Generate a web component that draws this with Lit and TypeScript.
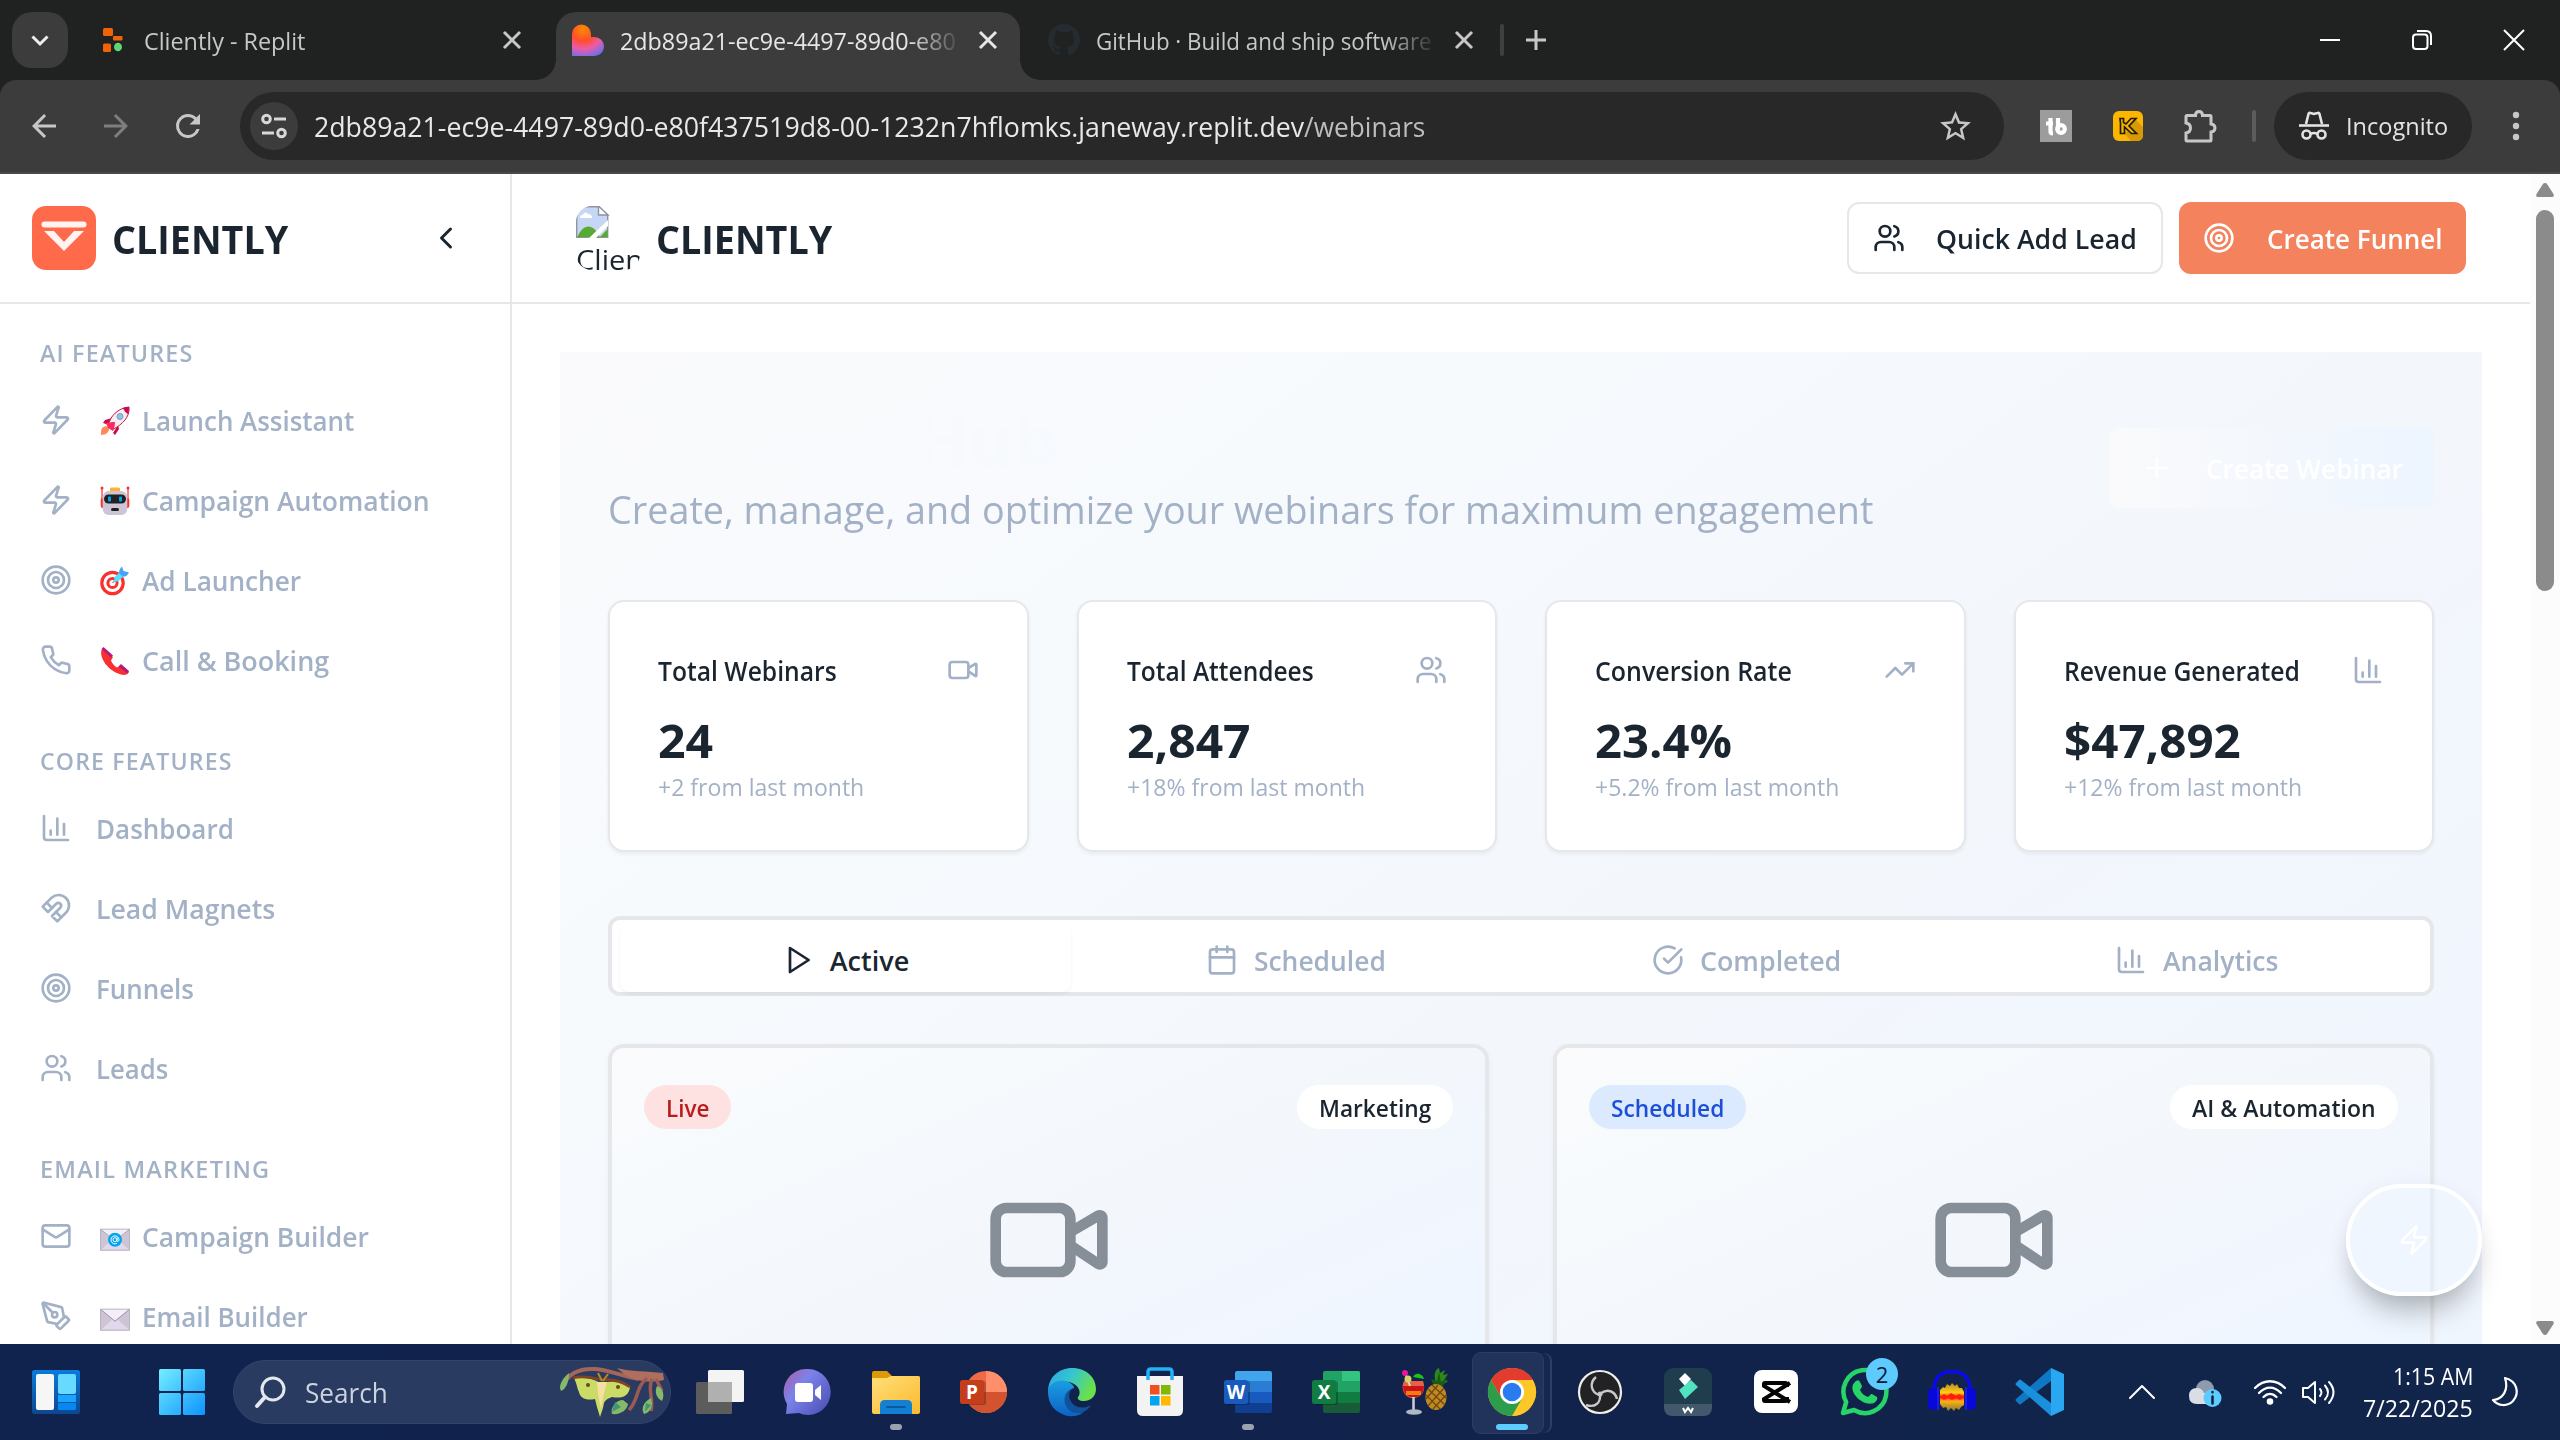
import { LitElement, html, css, svg, nothing } from "lit";
import { customElement, property } from "lit/decorators.js";

/* ---------- outline icons, 24-unit grid ---------- */
const ICONS: Record<string, any> = {
  zap: svg`<path d="M4 14a1 1 0 0 1-.78-1.63l9.9-10.2a.5.5 0 0 1 .86.46l-1.92 6.02A1 1 0 0 0 13 10h7a1 1 0 0 1 .78 1.63l-9.9 10.2a.5.5 0 0 1-.86-.46l1.92-6.02A1 1 0 0 0 11 14z"/>`,
  target: svg`<circle cx="12" cy="12" r="10"/><circle cx="12" cy="12" r="6"/><circle cx="12" cy="12" r="2"/>`,
  phone: svg`<path d="M22 16.92v3a2 2 0 0 1-2.18 2 19.79 19.79 0 0 1-8.63-3.07 19.5 19.5 0 0 1-6-6 19.79 19.79 0 0 1-3.07-8.67A2 2 0 0 1 4.11 2h3a2 2 0 0 1 2 1.72 12.84 12.84 0 0 0 .7 2.81 2 2 0 0 1-.45 2.11L8.09 9.91a16 16 0 0 0 6 6l1.27-1.27a2 2 0 0 1 2.11-.45 12.84 12.84 0 0 0 2.81.7A2 2 0 0 1 22 16.92z"/>`,
  chart: svg`<path d="M3 3v16a2 2 0 0 0 2 2h16"/><path d="M18 17V9"/><path d="M13 17V5"/><path d="M8 17v-3"/>`,
  magnet: svg`<path d="m6 15-4-4 6.75-6.77a7.79 7.79 0 0 1 11 11L13 22l-4-4 6.39-6.36a2.14 2.14 0 0 0-3-3L6 15"/><path d="m5 8 4 4"/><path d="m12 15 4 4"/>`,
  users: svg`<path d="M16 21v-2a4 4 0 0 0-4-4H6a4 4 0 0 0-4 4v2"/><circle cx="9" cy="7" r="4"/><path d="M22 21v-2a4 4 0 0 0-3-3.87"/><path d="M16 3.13a4 4 0 0 1 0 7.75"/>`,
  mail: svg`<rect x="2" y="4" width="20" height="16" rx="2"/><path d="m22 7-8.97 5.7a1.94 1.94 0 0 1-2.06 0L2 7"/>`,
  pen: svg`<path d="M15.707 21.293a1 1 0 0 1-1.414 0l-1.586-1.586a1 1 0 0 1 0-1.414l5.586-5.586a1 1 0 0 1 1.414 0l1.586 1.586a1 1 0 0 1 0 1.414z"/><path d="m18 13-1.375-6.874a1 1 0 0 0-.746-.776L3.235 2.028a1 1 0 0 0-1.207 1.207L5.35 15.879a1 1 0 0 0 .776.746L13 18"/><path d="m2.3 2.3 7.286 7.286"/><circle cx="11" cy="11" r="2"/>`,
  play: svg`<path d="M6 3 20 12 6 21z"/>`,
  calendar: svg`<path d="M8 2v4"/><path d="M16 2v4"/><rect x="3" y="4" width="18" height="18" rx="2"/><path d="M3 10h18"/>`,
  check: svg`<path d="M21.801 10A10 10 0 1 1 17 3.335"/><path d="m9 11 3 3L22 4"/>`,
  trend: svg`<path d="M22 7 13.5 15.5 8.5 10.5 2 17"/><path d="M16 7h6v6"/>`,
  plus: svg`<path d="M5 12h14"/><path d="M12 5v14"/>`,
  video: svg`<path d="m16 13 5.223 3.482a.5.5 0 0 0 .777-.416V7.87a.5.5 0 0 0-.752-.432L16 10.5"/><rect x="2" y="6" width="14" height="12" rx="2"/>`,
  left: svg`<path d="m15 18-6-6 6-6"/>`,
};
const icon = (name: string, size = 32, weight = 2) => html`<svg class="icon" width=${size} height=${size} viewBox="0 0 24 24" fill="none" stroke="currentColor" stroke-width=${weight} stroke-linecap="round" stroke-linejoin="round">${ICONS[name]}</svg>`;

/* ---------- colour glyphs beside the menu labels, 30-unit grid ---------- */
const EMOJI: Record<string, any> = {
  rocket: svg`<path d="M2 22c3-3 7-2 7 1s-3 6-8 6c0-3 0-5 1-7z" fill="#ff8a5c"/><path d="M5 14 12 12 9 19 3 17z" fill="#ca0b4a"/><path d="M13 27l5-8 1 4-4 6z" fill="#ca0b4a"/><path d="M8 20C10 10 18 2 29 1c1 10-6 17-17 23z" fill="#f4eef2" stroke="#d1124e" stroke-width="1"/><path d="M23 2c2-1 4-1 6-1 0 2 0 4-1 7-2-1-4-3-5-6z" fill="#ca0b4a"/><path d="M6 17c3-1 6-1 9-1 0 4-1 6-2 9l-5-3z" fill="#fb2c5c"/><circle cx="20" cy="10.500" r="3" fill="#85c6f5" stroke="#8b98a5" stroke-width="1"/>`,
  robot: svg`<path d="M2 1v20M28 1v20" stroke="#f8312f" stroke-width="1.200"/><circle cx="2" cy="2" r="1.500" fill="#f8312f"/><circle cx="28" cy="2" r="1.500" fill="#f8312f"/><rect x="0.700" y="12" width="4" height="10" rx="2" fill="#f8312f"/><rect x="25.300" y="12" width="4" height="10" rx="2" fill="#f8312f"/><rect x="10" y="1.500" width="10" height="6" rx="1.500" fill="#ffb02e"/><rect x="2.700" y="5" width="24.600" height="24" rx="6" fill="#cdc4d6"/><rect x="4" y="8.500" width="22" height="9" rx="4.500" fill="#212121"/><rect x="8" y="10.500" width="3" height="5" rx="1" fill="#00a6ed"/><rect x="19" y="10.500" width="3" height="5" rx="1" fill="#00a6ed"/><rect x="11" y="22" width="8" height="3" rx="1.500" fill="#212121"/>`,
  bullseye: svg`<circle cx="12.500" cy="17" r="10.700" fill="#fff" stroke="#f8312f" stroke-width="3.200"/><circle cx="12.500" cy="17" r="4.600" fill="#fff" stroke="#f8312f" stroke-width="3"/><path d="M12.500 17 20 9" stroke="#7ba7c4" stroke-width="1.500"/><path d="M14.500 11 20 6l4 4-5.500 5-4.500 1z" fill="#50e2ff"/><path d="M19 7c0-3 1-4.500 3-6.500L23.500 5 29 6.500C27 10 25 11 22.500 10.500z" fill="#46a4fb"/>`,
  receiver: svg`<path d="M2 3c-4 7 6 24 22 26 2 0 4-1 5-3l-8-7-4 2.500c-2-1-5-4-6-7L13 11z" fill="#f92f30"/><path d="m3.500 1 9.500 8.500-2 2L1.500 3zM21 18l8 7-1.500 2.500-9-7z" fill="#b4197c"/>`,
  email: svg`<g transform="translate(0 1.700)"><rect x="0.600" y="5.500" width="28.800" height="21" fill="#e1d8ec" stroke="#b4acbc"/><path d="M1 6v20l11-10zM29 6v20L18 16z" fill="#cdc4d6"/><path d="M1 6h28L15 17z" fill="#f3eef8"/><path d="M1 6l14 11L29 6" fill="none" stroke="#998ea4" stroke-width=".8"/><circle cx="15" cy="16" r="7" fill="#00a6ed"/><circle cx="15" cy="16" r="2" fill="none" stroke="#fff"/><path d="M17 14v3c0 1.200 2 1 2-1a4 4 0 1 0-2 3.600" fill="none" stroke="#fff"/></g>`,
  envelope: svg`<g transform="translate(0 1.700)"><rect x="0.600" y="5.500" width="28.800" height="21" fill="#e1d8ec" stroke="#b4acbc"/><path d="M1 6v20l11-10zM29 6v20L18 16z" fill="#cdc4d6"/><path d="M1 6h28L15 17z" fill="#f3eef8"/><path d="M1 6l14 11.500L29 6" fill="none" stroke="#998ea4"/></g>`,
};
const emoji = (name: string) => html`<svg class="emoji" width="30" height="30" viewBox="0 0 30 30">${EMOJI[name]}</svg>`;

/* ---------- taskbar apps, 48-unit grid ---------- */
const office = (dark: string, letter: string, back: any) => svg`${back}<rect x="2" y="13" width="24" height="24" rx="2.500" fill="#000" opacity=".25"/><rect x="0" y="12" width="24" height="24" rx="2.500" fill=${dark}/><text x="12" y="31" text-anchor="middle" font-family="Open Sans, sans-serif" font-weight="700" font-size="19" fill="#fff">${letter}</text>`;
const APPS: Record<string, any> = {
  widgets: svg`<defs><linearGradient id="wg" x1="0" y1="0" x2="0" y2="1"><stop offset="0" stop-color="#0a7bdc"/><stop offset="1" stop-color="#0d478f"/></linearGradient></defs><rect y="2" width="48" height="44" rx="2.500" fill="url(#wg)"/><rect x="4" y="6" width="18" height="36" rx="2" fill="#f6f6f6"/><rect x="26" y="6" width="18" height="20" rx="2" fill="#68d9ff"/><rect x="26" y="27" width="18" height="7" fill="#1ba4ff"/><rect x="26" y="35" width="18" height="7" rx="1" fill="#0588f0"/>`,
  start: svg`<defs><linearGradient id="st" gradientUnits="userSpaceOnUse" x1="0" y1="0" x2="48" y2="48"><stop offset="0" stop-color="#76f0ff"/><stop offset="1" stop-color="#0a92ff"/></linearGradient></defs><g fill="url(#st)"><rect x="1" y="1" width="22" height="22" rx="1.500"/><rect x="25" y="1" width="22" height="22" rx="1.500"/><rect x="1" y="25" width="22" height="22" rx="1.500"/><rect x="25" y="25" width="22" height="22" rx="1.500"/></g>`,
  taskview: svg`<rect y="14" width="36" height="32" rx="1.500" fill="#5c5c5c"/><rect x="12" y="2" width="36" height="32" rx="1.500" fill="#f4f4f4"/><path d="M12 14h24v20H12z" fill="#b0b0b0"/>`,
  chat: svg`<defs><linearGradient id="ch" x1="0" y1="0" x2="1" y2=".8"><stop offset="0" stop-color="#b05b9f"/><stop offset=".4" stop-color="#7b83eb"/><stop offset="1" stop-color="#4f52b8"/></linearGradient></defs><path d="M24 1a22.500 23 0 1 1-9 44L2 46l1-10A22.500 23 0 0 1 24 1z" fill="url(#ch)"/><rect x="11" y="15" width="18" height="19" rx="3" fill="#fff"/><path d="M31 22l6-5v15l-6-5z" fill="#fff"/>`,
  folder: svg`<defs><linearGradient id="fo" x1="0" y1="0" x2="1" y2="1"><stop offset="0" stop-color="#ffe07a"/><stop offset="1" stop-color="#fbb92e"/></linearGradient></defs><path d="M0 5q0-2 2-2h13l5 5h26q2 0 2 2v8H0z" fill="#dc9b06"/><path d="M0 10h15l4-2h27q2 0 2 2v34q0 2-2 2H2q-2 0-2-2z" fill="url(#fo)"/><path d="M8 46V37q0-5 5-5h22q5 0 5 5v9z" fill="#1480d4"/><path d="M15 39h18" stroke="#0b5aa0" stroke-width="2" stroke-linecap="round"/>`,
  ppt: office("#c43e1c", "P", svg`<circle cx="26" cy="24" r="21" fill="#ed6c47"/><path d="M26 3a21 21 0 0 1 21 21H26z" fill="#ff8f6b"/><path d="M5 24h42a21 21 0 0 1-42 0z" fill="#d35230"/>`),
  edge: svg`<defs><linearGradient id="ea" x1="0" y1="0" x2="1" y2=".4"><stop offset="0" stop-color="#2aa6e8"/><stop offset=".5" stop-color="#35c6cf"/><stop offset="1" stop-color="#6ae04b"/></linearGradient><linearGradient id="eb" x1="0" y1="0" x2="0" y2="1"><stop offset="0" stop-color="#1b9de2"/><stop offset="1" stop-color="#0d62c4"/></linearGradient></defs><path d="M0 24C0 9 11 0 24 0c15 0 24 10 24 21 0 8-6 12-12 12-5 0-7-2-6-4 3-3 2-10-4-13C16 11 3 14 0 24z" fill="url(#ea)"/><path d="M0 24c0-7 8-13 17-11 5 1 9 4 9 7-7 2-9 9-7 15 3 9 12 11 17 9-8 6-17 5-24 1C4 41 0 33 0 24z" fill="url(#eb)"/><path d="M24 21c-8 2-10 13-4 20s18 5 23-4c-7 4-14 3-18-1-5-5-5-11-1-15z" fill="#10529c"/>`,
  store: svg`<path d="M12 12V4q0-3 3-3h18q3 0 3 3v8" fill="none" stroke="#22b1f4" stroke-width="3.500"/><path d="M1 8h46v34q0 6-6 6H7q-6 0-6-6z" fill="#f3f3f3"/><path d="M12 8v4M36 8v4" stroke="#22b1f4" stroke-width="3.500"/><rect x="14" y="17" width="9.500" height="9.500" fill="#f25022"/><rect x="25" y="17" width="9.500" height="9.500" fill="#7fba00"/><rect x="14" y="28" width="9.500" height="9.500" fill="#00a4ef"/><rect x="25" y="28" width="9.500" height="9.500" fill="#ffb900"/>`,
  word: office("#185abd", "W", svg`<path d="M11 5q0-2 2-2h33q2 0 2 2v8H11z" fill="#41a5ee"/><path d="M11 13h37v11H11z" fill="#2b7cd3"/><path d="M11 24h37v11H11z" fill="#185abd"/><path d="M11 35h37v8q0 2-2 2H13q-2 0-2-2z" fill="#103f91"/>`),
  excel: office("#107c41", "X", svg`<path d="M11 5q0-2 2-2h33q2 0 2 2v8H11z" fill="#21a366"/><path d="M30 3h16q2 0 2 2v8H30z" fill="#33c481"/><path d="M11 13h37v11H11z" fill="#21a366"/><path d="M11 24h37v11H11z" fill="#107c41"/><path d="M11 35h37v8q0 2-2 2H13q-2 0-2-2z" fill="#185c37"/>`),
  cocktail: svg`<path d="M37 17C32 6 36 1 39 0l1 5 5-3-2 5 5-1-4 6 4 1-6 4z" fill="#2c8a1c"/><path d="M31 11l6 2 2-9 2 10 6-4-4 8h-9z" fill="#195c16"/><ellipse cx="36" cy="29" rx="10.500" ry="13" fill="#bf8a25"/><path d="M28 21l17 16M32 17l14 13M26 27l14 14M44 20 28 38M46 27 33 41M38 17 26 31" stroke="#704708" stroke-width="1.200"/><path d="M4 13h19c3 8 0 16-9 17S0 21 4 13z" fill="#e8604a"/><path d="M3 18h21c0 6-3 9-7 11h-7C5 27 3 23 3 18z" fill="#c81417"/><path d="M6 23h15v4H6z" fill="#f27c13"/><path d="M13.500 29v13" stroke="#c7d0da" stroke-width="2.500"/><ellipse cx="14" cy="44" rx="8" ry="2.800" fill="#aeb7c4"/><path d="M5 5l5 13" stroke="#d8e5a0" stroke-width="2"/><circle cx="5" cy="5" r="3" fill="#e815a4"/><circle cx="8" cy="11" r="3.500" fill="#d7d26b"/><path d="M13 9c3-6 10-3 11 2z" fill="#19c41b"/>`,
  chrome: svg`<circle cx="24" cy="24" r="24" fill="#fbc116"/><path d="M24 24 3.200 12A24 24 0 0 1 44.800 12H24z" fill="#e33b2e"/><path d="M24 12H44.800A24 24 0 0 1 24 48l10.400-18z" fill="#fdc727"/><path d="M24 48A24 24 0 0 1 3.200 12l10.400 18L24 36l10.400-6z" fill="#2c9e4b"/><path d="M3.200 12 13.600 30 14 18 24 12z" fill="#e33b2e"/><circle cx="24" cy="24" r="12" fill="#fff"/><circle cx="24" cy="24" r="9.300" fill="#2b7bf0"/>`,
  obs: svg`<circle cx="24" cy="24" r="21" fill="#222123" stroke="#eee" stroke-width="2.200"/><g fill="none" stroke="#c8c8c8" stroke-width="2.400"><path d="M23 27c-8-3-10-12-3-18"/><path d="M24 26c7-6 15-3 17 5"/><path d="M24 26c1 9-5 14-14 11"/></g><circle cx="24" cy="26" r="2.500" fill="#c8c8c8"/>`,
  filmora: svg`<rect width="48" height="48" rx="9" fill="#1f3d4c"/><path d="M0 36h48v3q0 9-9 9H9q-9 0-9-9z" fill="#41596a"/><path d="M15 11l6-6 6 6-6 7z" fill="#fff"/><path d="M15 22 27 12l7 7-13 12z" fill="#4fe3c1"/><path d="M19 40l2 4 3-4 3 4 2-4" fill="none" stroke="#fff" stroke-width="2"/>`,
  capcut: svg`<rect x="2" y="2" width="44" height="43" rx="8" fill="#fff"/><path d="M38 15 12 31v1q0 1 1 1h20q2 0 2-2v-2M38 34 12 18v-2q0-1 1-1h20q2 0 2 2v2" fill="none" stroke="#050505" stroke-width="4"/>`,
  whatsapp: svg`<path d="M3 45l3.200-11A21.500 21.500 0 1 1 14 42z" fill="#11234d" stroke="#27d467" stroke-width="4.500" stroke-linejoin="round"/><path d="M16 13c2-1 3-1 4 1l2 4c0 2-2 3-2 4 2 4 5 6 8 7 2-1 2-3 4-3l5 3c1 2-1 6-5 6.500C22 37 11 26 12.500 18c.5-2 2-4 3.500-5z" fill="#27d467"/>`,
  audacity: svg`<defs><linearGradient id="au" x1="0" y1="0" x2="0" y2="1"><stop offset="0" stop-color="#b98a1c"/><stop offset=".35" stop-color="#ffcf18"/><stop offset=".5" stop-color="#ff1b0c"/><stop offset=".65" stop-color="#ffb018"/><stop offset="1" stop-color="#8a7b30"/></linearGradient></defs><path d="M6 26C5 10 12 3.500 24 3.500S43 10 42 26" fill="none" stroke="#0a0aec" stroke-width="3.500"/><path d="M12 22l3-3 2 1 2-4 3 2 2-3 3 3 2-2 2 4 3 0 2 4v13l-3 2-2 3-3-2-2 3-3-3-3 3-2-4-3 1-3-4z" fill="url(#au)"/><path d="M12 29l4-3 3 2 4-3 5 3 3-2 5 3-4 3-4-2-4 2-4-2-4 2z" fill="#ff1c10"/><rect x="0" y="20" width="9" height="22" rx="4.500" fill="#0808d8"/><rect x="39" y="20" width="9" height="22" rx="4.500" fill="#0808d8"/><path d="M10 19v23M38 19v23" stroke="#1a1aff" stroke-width="2"/>`,
  vscode: svg`<path d="M35 0 48 6v36l-13 6z" fill="#29a8f1"/><path d="M35 0v13L5 36q-1 1-2 0l-3-3q-1-1 0-2z" fill="#0e78c4"/><path d="M35 48V35L5 12q-1-1-2 0l-3 3q-1 1 0 2z" fill="#1a8fdc"/>`,
};
const app = (name: string, size = 48) => html`<svg width=${size} height=${size} viewBox="0 0 48 48">${APPS[name]}</svg>`;

/* One line of text set to an exact measure. */
@customElement("line-text")
class LineText extends LitElement {
  @property() text = "";
  @property({ type: Number }) measure = 0;
  static styles = css`
    :host { display: block; flex: none; white-space: nowrap; }
    .run { display: inline-block; transform-origin: 0 50%; white-space: pre; }
  `;
  firstUpdated() {
    const run = this.renderRoot.querySelector(".run") as HTMLElement;
    const natural = run.offsetWidth;
    if (natural && this.measure) run.style.transform = `scaleX(${this.measure / natural})`;
  }
  render() {
    this.style.width = `${this.measure}px`;
    return html`<span class="run">${this.text}</span>`;
  }
}
const line = (text: string, measure: number) => html`<line-text .text=${text} .measure=${measure}></line-text>`;

const base = css`
  * { box-sizing: border-box; }
  svg { display: block; flex: none; overflow: visible; }
`;

@customElement("browser-chrome")
class BrowserChrome extends LitElement {
  static styles = [base, css`
    :host { display: block; background: #202221; color: #c7c7c7; }
    .tabs { display: flex; align-items: center; height: 80px; padding-left: 12px; font-size: 23.500px; }
    .menu { width: 56px; height: 56px; border-radius: 20px; background: #3c3c3c; display: grid; place-items: center; color: #eee; }
    .tab { position: relative; display: flex; align-items: center; gap: 16px; height: 68px; align-self: flex-end; padding: 0 16px 12px 28px; }
    .first { width: 488px; padding-right: 28px; }
    .active { width: 464px; padding-left: 16px; background: #3c3c3c; border-radius: 20px 20px 0 0; color: #e6e6e6; }
    .active::before, .active::after { content: ""; position: absolute; bottom: 0; width: 20px; height: 20px; }
    .active::before { left: -20px; background: radial-gradient(circle at 0 0, transparent 19.500px, #3c3c3c 20px); }
    .active::after { right: -20px; background: radial-gradient(circle at 100% 0, transparent 19.500px, #3c3c3c 20px); }
    .third { width: 480px; padding-right: 20px; }
    .name { flex: 1; padding-top: 2px; }
    .fade { mask-image: linear-gradient(90deg, #000 calc(100% - 48px), rgba(0,0,0,.12) 100%); }
    .rule { width: 4px; height: 32px; border-radius: 2px; background: #3e403f; }
    .add { width: 64px; display: grid; place-items: center; }
    .window { margin-left: auto; display: flex; color: #fff; }
    .window div { width: 92px; display: grid; place-items: center; }
    .bar { display: flex; align-items: center; height: 94px; padding-left: 8px; background: #3c3c3c; border-bottom: 2px solid #4a484a; border-radius: 16px 16px 0 0; }
    .tool { width: 72px; display: grid; place-items: center; }
    .dim { color: #7e7e7e; }
    .address { display: flex; align-items: center; width: 1764px; height: 68px; margin: 0 16px; padding: 0 30px 0 10px; border-radius: 34px; background: #282828; font-size: 28px; color: #e8e8e8; }
    .site { width: 48px; height: 48px; margin-right: 16px; border-radius: 50%; background: #3c3c3c; display: grid; place-items: center; }
    .path { color: #bdbdbd; }
    .star { margin-left: auto; color: #c7c7c7; }
    .divider { width: 4px; height: 32px; margin: 0 18px 0 16px; border-radius: 2px; background: #5c5c5c; }
    .private { display: flex; align-items: center; width: 198px; height: 68px; padding: 0 0 1px 24px; gap: 16px; border-radius: 34px; background: #282828; color: #e3e3e3; font-size: 24px; }
    .dots { width: 88px; display: grid; place-items: center; }
  `];
  cross() { return html`<svg width="32" height="32" viewBox="0 0 32 32" stroke="currentColor" stroke-width="3"><path d="M8 8l16 16M24 8 8 24"/></svg>`; }
  render() {
    return html`
      <div class="tabs">
        <div class="menu"><svg width="24" height="24" viewBox="0 0 24 24" fill="none" stroke="currentColor" stroke-width="3"><path d="M4.500 8.500 12 16l7.500-7.500"/></svg></div>
        <div class="tab first">
          <svg width="32" height="32" viewBox="0 0 32 32"><rect x="7" y="4" width="10" height="8" rx="1.500" fill="#f26207"/><rect x="17" y="12" width="9.500" height="4.500" rx="1" fill="#f26207"/><rect x="7" y="19.500" width="8" height="8.500" rx="1.500" fill="#f26207"/><ellipse cx="22" cy="23" rx="4" ry="4.300" fill="#5bd778"/></svg>
          <div class="name">${line("Cliently - Replit", 161)}</div>${this.cross()}
        </div>
        <div class="tab active">
          <svg width="32" height="32" viewBox="0 0 32 32"><defs><radialGradient id="heart" cx=".35" cy=".15" r="1"><stop offset="0" stop-color="#ff8a00"/><stop offset=".38" stop-color="#ff4d2e"/><stop offset=".62" stop-color="#ee5ba6"/><stop offset="1" stop-color="#4b73ff"/></radialGradient></defs><path d="M0 10a9.500 9.500 0 0 1 19 0v3h3.500a9.500 9.500 0 0 1 0 19H0z" fill="url(#heart)"/></svg>
          <div class="name fade">${line("2db89a21-ec9e-4497-89d0-e80", 336)}</div>${this.cross()}
        </div>
        <div class="tab third">
          <svg width="32" height="32" viewBox="0 0 16 16" fill="#242b31"><path d="M8 0C3.580 0 0 3.580 0 8c0 3.540 2.290 6.530 5.470 7.590.4.070.55-.17.55-.38 0-.19-.01-.82-.01-1.490-2.010.37-2.530-.49-2.690-.94-.09-.23-.48-.94-.82-1.130-.28-.15-.68-.52-.01-.53.63-.01 1.080.58 1.230.82.72 1.210 1.870.87 2.330.66.07-.52.28-.87.51-1.070-1.780-.2-3.640-.89-3.640-3.950 0-.87.31-1.590.82-2.150-.08-.2-.36-1.020.08-2.120 0 0 .67-.21 2.200.82.64-.18 1.320-.27 2-.27s1.360.09 2 .27c1.530-1.040 2.200-.82 2.200-.82.44 1.100.16 1.920.08 2.120.51.56.82 1.270.82 2.150 0 3.070-1.870 3.750-3.650 3.950.29.25.54.73.54 1.480 0 1.070-.01 1.930-.01 2.200 0 .21.15.46.55.38A8.010 8.010 0 0 0 16 8c0-4.420-3.580-8-8-8z"/></svg>
          <div class="name fade">${line("GitHub · Build and ship software", 336)}</div>${this.cross()}
        </div>
        <div class="rule"></div>
        <div class="add"><svg width="20" height="20" viewBox="0 0 20 20" stroke="currentColor" stroke-width="3"><path d="M10 0v20M0 10h20"/></svg></div>
        <div class="window">
          <div><svg width="20" height="20" viewBox="0 0 20 20" stroke="currentColor" stroke-width="2"><path d="M0 10h20"/></svg></div>
          <div><svg width="20" height="20" viewBox="0 0 20 20" fill="none" stroke="currentColor" stroke-width="2"><rect x="1" y="4.500" width="14.500" height="14.500" rx="3"/><path d="M5 1h9q5 0 5 5v9"/></svg></div>
          <div><svg width="20" height="20" viewBox="0 0 20 20" stroke="currentColor" stroke-width="2"><path d="M0 0l20 20M20 0 0 20"/></svg></div>
        </div>
      </div>
      <div class="bar">
        <div class="tool"><svg width="36" height="36" viewBox="0 0 24 24" fill="currentColor"><path d="M20 11H7.830l5.590-5.590L12 4l-8 8 8 8 1.410-1.410L7.830 13H20z"/></svg></div>
        <div class="tool dim"><svg width="36" height="36" viewBox="0 0 24 24" fill="currentColor"><path d="M4 11h12.170l-5.590-5.590L12 4l8 8-8 8-1.410-1.410L16.170 13H4z"/></svg></div>
        <div class="tool"><svg width="36" height="36" viewBox="0 0 24 24" fill="currentColor"><path d="M17.650 6.350A7.960 7.960 0 0 0 12 4a8 8 0 1 0 7.730 10h-2.080A6 6 0 1 1 12 6c1.660 0 3.140.69 4.220 1.780L13 11h7V4z"/></svg></div>
        <div class="address">
          <div class="site"><svg width="28" height="28" viewBox="0 0 28 28" fill="none" stroke="#d8d8d8" stroke-width="3"><circle cx="6.500" cy="7" r="3.800"/><path d="M14 7h12M2 21h12"/><circle cx="21.500" cy="21" r="3.800"/></svg></div>
          ${line("2db89a21-ec9e-4497-89d0-e80f437519d8-00-1232n7hflomks.janeway.replit.dev", 990)}
          <div class="path">${line("/webinars", 121)}</div>
          <svg class="star" width="37" height="37" viewBox="0 0 24 24" fill="currentColor"><path d="M22 9.240l-7.190-.62L12 2 9.190 8.630 2 9.240l5.460 4.730L5.820 21 12 17.270 18.180 21l-1.630-7.030zM12 15.400l-3.760 2.270 1-4.280-3.320-2.880 4.380-.38L12 6.100l1.710 4.040 4.380.38-3.320 2.880 1 4.280z"/></svg>
        </div>
        <div class="tool"><svg width="32" height="32" viewBox="0 0 32 32"><path d="M0 0h32v32H0z" fill="#9c9c9c"/><g fill="none" stroke="#fff" stroke-width="4.200"><path d="M10.500 8v13.500q0 2 2.500 2M6 13.500h7"/><path d="M18 8v12"/><circle cx="21" cy="19" r="3.800"/></g></svg></div>
        <div class="tool"><svg width="30" height="30" viewBox="0 0 30 30"><rect width="30" height="30" rx="6" fill="#fbb602"/><path d="M12 23 22 8l8 8v8q0 6-6 6h-6z" fill="#d79a06"/><path d="M7 7.500h3.500v4l2.500 1.500 5-5.500h5L16 15l7.500 7.500h-5L11.500 16v6.500H7.500V12z" fill="#fbb602" stroke="#221b05" stroke-width="1.700"/></svg></div>
        <div class="tool"><svg width="32" height="32" viewBox="0 0 32 32" fill="none" stroke="currentColor" stroke-width="3"><path d="M2 6.500q0-1 1-1h8.500q0-4 3.500-4t3.500 4H26q1 0 1 1V14q4 .5 4 4t-4 4v8q0 1-1 1H3q-1 0-1-1v-7c6-1 6-9 0-10z"/></svg></div>
        <div class="divider"></div>
        <div class="private">
          <svg width="32" height="32" viewBox="0 0 32 32" fill="none" stroke="currentColor" stroke-width="2.600"><path d="M1 15.500h30"/><path d="M8 14l2.500-10q.5-1.500 2-1l3.500 1 3.500-1q1.500-.5 2 1L24 14"/><circle cx="8.500" cy="24.500" r="4"/><circle cx="23.500" cy="24.500" r="4"/><path d="M12.500 24q3.500-2 7 0"/></svg>
          ${line("Incognito", 102)}
        </div>
        <div class="dots"><svg width="8" height="30" viewBox="0 0 8 30" fill="currentColor"><circle cx="4" cy="4" r="3.200"/><circle cx="4" cy="15" r="3.200"/><circle cx="4" cy="26" r="3.200"/></svg></div>
      </div>`;
  }
}

const MENU = [
  { title: "AI FEATURES", width: 153, items: [
    ["zap", "rocket", "Launch Assistant", 212], ["zap", "robot", "Campaign Automation", 288],
    ["target", "bullseye", "Ad Launcher", 159], ["phone", "receiver", "Call & Booking", 187]] },
  { title: "CORE FEATURES", width: 193, items: [
    ["chart", "", "Dashboard", 138], ["magnet", "", "Lead Magnets", 179],
    ["target", "", "Funnels", 98], ["users", "", "Leads", 72]] },
  { title: "EMAIL MARKETING", width: 230, items: [
    ["mail", "email", "Campaign Builder", 227], ["pen", "envelope", "Email Builder", 166]] },
] as { title: string; width: number; items: [string, string, string, number][] }[];

@customElement("side-menu")
class SideMenu extends LitElement {
  static styles = [base, css`
    :host { display: block; width: 512px; flex: none; border-right: 2px solid #e5e7eb; background: #fff; overflow: hidden; box-sizing: border-box; }
    .head { display: flex; align-items: center; height: 130px; padding: 0 46px 0 32px; border-bottom: 2px solid #e5e7eb; color: #1a2530; }
    .brand { margin: 0 auto 0 16px; font-size: 39px; font-weight: 700; }
    .group { padding: 28px 40px 12px; color: #a3b1c6; }
    .title { height: 42px; line-height: 42px; font-size: 23px; font-weight: 600; letter-spacing: .05em; }
    .list { margin-top: 6px; }
    .row { display: flex; align-items: center; height: 80px; font-size: 27.500px; font-weight: 600; }
    .row .icon { margin-right: 24px; }
    .emoji { margin: 2px 12px 0 4px; }
  `];
  render() {
    return html`
      <div class="head">
        <svg width="64" height="64" viewBox="0 0 64 64"><rect width="64" height="64" rx="14" fill="#ff6b4a"/><rect x="9.500" y="15.500" width="45" height="6" rx="3" fill="#fff4f1"/><path d="M12 25h10l10 11 10-11h10L32 45z" fill="#fff4f1"/></svg>
        <div class="brand">${line("CLIENTLY", 176)}</div>
        ${icon("left", 36)}
      </div>
      ${MENU.map(g => html`<div class="group">
        <div class="title">${line(g.title, g.width)}</div>
        <div class="list">${g.items.map(([i, e, label, w]) => html`<div class="row">${icon(i)}${e ? emoji(e) : nothing}${line(label, w)}</div>`)}</div>
      </div>`)}`;
  }
}

const STATS: [string, number, string, string, number, string, number][] = [
  ["Total Webinars", 179, "video", "24", 55, "+2 from last month", 206],
  ["Total Attendees", 187, "users", "2,847", 124, "+18% from last month", 238],
  ["Conversion Rate", 197, "trend", "23.4%", 137, "+5.2% from last month", 244],
  ["Revenue Generated", 236, "chart", "$47,892", 177, "+12% from last month", 238],
];
const TABS: [string, string, number][] = [["play", "Active", 79], ["calendar", "Scheduled", 132], ["check", "Completed", 141], ["chart", "Analytics", 115]];
const WEBINARS: [string, string, number, string, number][] = [["live", "Live", 43, "Marketing", 112], ["planned", "Scheduled", 113, "AI & Automation", 184]];

@customElement("webinar-page")
class WebinarPage extends LitElement {
  static styles = [base, css`
    :host { display: block; flex: 1; min-width: 0; background: #fff; color: #1a2530; overflow: hidden; }
    .head { display: flex; align-items: center; gap: 16px; height: 130px; padding: 0 64px; border-bottom: 2px solid #e5e7eb; }
    .missing { width: 64px; height: 64px; border-radius: 16px; overflow: hidden; font-size: 27px; line-height: 44px; }
    .brand { margin: 0 auto 0 0; font-size: 39px; font-weight: 700; }
    .button { display: flex; align-items: center; height: 72px; border-radius: 12px; font-size: 27.500px; font-weight: 600; }
    .button line-text { margin-top: 1px; }
    .outline { width: 316px; padding-left: 24px; gap: 31px; border: 2px solid #e5e7eb; }
    .solid { width: 287px; padding-left: 24px; gap: 32px; background: #f3825d; color: #fff; }
    .panel { height: 1400px; margin: 48px; padding: 48px; background: linear-gradient(to bottom right, #fafafc, #f7fafd 22%, #f3f7fc 50%, #f1f6fe 75%, #eff6ff); }
    .intro { display: flex; justify-content: space-between; align-items: center; height: 136px; margin-bottom: 64px; }
    .heading { display: block; margin: 0; width: 446px; font-size: 70px; line-height: 80px; font-weight: 700; white-space: nowrap; color: transparent; background: linear-gradient(90deg, #fafafc, #f6f9fd); background-clip: text; -webkit-background-clip: text; letter-spacing: -.01em; }
    .sub { padding-top: 1px; margin-bottom: -1px; font-size: 38.500px; line-height: 56px; color: #a3b1c6; }
    .create { width: 325px; height: 80px; padding-left: 32px; gap: 33px; background: linear-gradient(90deg, #fafafb, #edf5ff); color: #fff; }
    .stats { display: grid; grid-template-columns: repeat(4, 1fr); gap: 48px; }
    .stat { height: 252px; padding: 48px; background: #fff; border: 2px solid #e5e7eb; border-radius: 16px; box-shadow: 0 2px 4px rgba(0,0,0,.06); }
    .top { display: flex; align-items: center; justify-content: space-between; height: 40px; font-size: 27px; font-weight: 600; }
    .top .icon { color: #a3b1c6; }
    .value { margin-top: 22px; height: 56px; line-height: 56px; font-size: 46.500px; font-weight: 700; }
    .note { margin-top: 3px; line-height: 32px; font-size: 23.500px; color: #a3b1c6; }
    .tabs { display: grid; grid-template-columns: repeat(4, 1fr); height: 80px; margin: 64px 0 48px; padding: 4px 8px 0; background: #fff; border: 4px solid #e5e7eb; border-radius: 12px; color: #a3b1c6; }
    .tab { display: flex; align-items: center; justify-content: center; gap: 16px; height: 68px; padding-top: 4px; font-size: 27px; font-weight: 600; border-radius: 10px; }
    .tab line-text { margin-top: 1px; }
    .tab.on { color: #1a2530; box-shadow: 0 2px 4px rgba(0,0,0,.05); }
    .cards { display: grid; grid-template-columns: 1fr 1fr; gap: 64px; }
    .card { height: 620px; border: 4px solid #e5e7eb; border-radius: 16px; overflow: hidden; box-shadow: 0 2px 6px rgba(0,0,0,.04); background: #fff; }
    .cover { display: grid; height: 384px; background: linear-gradient(to bottom right, #fbfbfc, #f6fafd 22%, #f3f7fc 50%, #f1f6ff 72%, #edf7ff); }
    .badges, .art { grid-area: 1 / 1; }
    .art { place-self: center; color: #868f98; }
    .badges { display: flex; justify-content: space-between; align-items: flex-start; padding: 37px 32px 0; }
    .badge { height: 44px; line-height: 46px; padding: 0 22px; border-radius: 22px; font-size: 23.500px; font-weight: 600; background: #fff; }
    .live { background: #fee2e2; color: #b91c1c; }
    .planned { background: #dbeafe; color: #1d4ed8; }
  `];
  render() {
    return html`
      <div class="head">
        <div class="missing">
          <svg width="32" height="32" viewBox="0 0 32 32"><path d="M0 0h22l10 9v23H0z" fill="#c6d7f6"/><path d="M.7 0v31.300h31V9L22.500.7H0z" fill="none" stroke="#8d949e" stroke-width="1.400"/><path d="M22.500 0v9H32z" fill="#fff" stroke="#8d949e" stroke-width="1.400"/><path d="M4 12q0-3 3-3.500Q9 5 12 8q4 0 4 4z" fill="#fff"/><path d="M1.400 31c5-13 16-15 22 0z" fill="#57ab33"/><path d="M13 32 32 14v6L20 32z" fill="#fff"/><path d="M24 31h7.500V23z" fill="#57ab33"/></svg>
          ${line("Cliently", 99)}
        </div>
        <div class="brand">${line("CLIENTLY", 176)}</div>
        <div class="button outline">${icon("users")}${line("Quick Add Lead", 201)}</div>
        <div class="button solid">${icon("target")}${line("Create Funnel", 176)}</div>
      </div>
      <div class="panel">
        <div class="intro">
          <div>
            <h1 class="heading">Webinar Hub</h1>
            <div class="sub">${line("Create, manage, and optimize your webinars for maximum engagement", 1265)}</div>
          </div>
          <div class="button create">${icon("plus")}${line("Create Webinar", 197)}</div>
        </div>
        <div class="stats">${STATS.map(([t, tw, i, v, vw, n, nw]) => html`
          <div class="stat">
            <div class="top">${line(t, tw)}${icon(i)}</div>
            <div class="value">${line(v, vw)}</div>
            <div class="note">${line(n, nw)}</div>
          </div>`)}</div>
        <div class="tabs">${TABS.map(([i, t, w], k) => html`<div class="tab ${k ? "" : "on"}">${icon(i)}${line(t, w)}</div>`)}</div>
        <div class="cards">${WEBINARS.map(([kind, s, sw, c, cw]) => html`
          <div class="card"><div class="cover">
            <div class="badges"><div class="badge ${kind}">${line(s, sw)}</div><div class="badge">${line(c, cw)}</div></div>
            <div class="art">${icon("video", 128)}</div>
          </div></div>`)}</div>
      </div>`;
  }
}

@customElement("task-bar")
class TaskBar extends LitElement {
  static styles = [base, css`
    :host { display: flex; align-items: center; height: 96px; background: linear-gradient(90deg, #10234e, #11224b 60%, #11264a); color: #fff; padding-left: 32px; box-sizing: border-box; }
    .start { margin: 0 27px 0 78px; }
    .search { display: flex; align-items: center; width: 438px; height: 64px; padding: 0 5px 0 21px; border-radius: 32px; background: #2a3b61; border: 1px solid #33446a; color: #ccd2de; font-size: 28px; }
    .search .label { margin: 0 auto 0 18px; }
    .apps { display: flex; height: 96px; margin-left: 5px; }
    .slot { position: relative; display: grid; place-items: center; width: 88px; }
    .slot svg { position: relative; }
    .dot::after { content: ""; position: absolute; bottom: 10px; width: 12px; height: 6px; border-radius: 3px; background: #99a1b3; }
    .current::before { content: ""; position: absolute; left: 4px; top: 8px; width: 70px; height: 80px; border-radius: 9px; background: #21335a; border: 1.500px solid #2c3e63; box-shadow: 7px 0 0 -1px #15274f, 9px 0 0 -1px #2c3e63; }
    .current::after { content: ""; position: absolute; bottom: 10px; width: 32px; height: 6px; border-radius: 3px; background: #5ecbff; }
    .count { position: absolute; right: 10px; top: 14px; width: 32px; height: 32px; border-radius: 50%; background: #5ecbff; color: #0b1a33; font-size: 22px; line-height: 32px; text-align: center; }
    .tray { display: flex; align-items: center; margin-left: auto; padding-right: 41px; }
    .clock { margin: 0 18px 0 29px; display: flex; flex-direction: column; align-items: flex-end; font-size: 24px; line-height: 32px; }
  `];
  render() {
    const apps = ["taskview", "chat", "folder", "ppt", "edge", "store", "word", "excel", "cocktail", "chrome", "obs", "filmora", "capcut", "whatsapp", "audacity", "vscode"];
    const state: Record<string, string> = { folder: "dot", word: "dot", chrome: "current" };
    return html`
      ${app("widgets")}
      <div class="start">${app("start")}</div>
      <div class="search">
        <svg width="32" height="32" viewBox="0 0 32 32" fill="none" stroke="#e3e7ee" stroke-width="3" stroke-linecap="round"><circle cx="18" cy="13" r="11"/><path d="M10 21 2 30" stroke-width="4"/></svg>
        <div class="label">${line("Search", 83)}</div>
        <svg width="106" height="52" viewBox="0 0 106 52">
          <path d="M3 23C7 8 20 2 36 3c15 1 29 8 44 10" fill="none" stroke="#a4665a" stroke-width="4"/><path d="M58 2c14 4 30 3 46 5l1 7c-18 4-30 0-40-6z" fill="#b06f5e"/><path d="M88 12c-12 10-8 22-18 32M93 13c-5 12 2 18-1 32M97 13l6 12" fill="none" stroke="#9a5b53" stroke-width="3.500"/>
          <path d="M10 7c-6 5-11 12-8 18 5-2 8-9 8-18zM64 34c-7 0-13 8-11 14 7 1 15-3 16-10zM92 32c-8 4-10 11-7 16 6-1 10-8 7-16zM98 20c-3 7 0 12 5 15 3-6 1-13-5-15z" fill="#86ba6a"/>
          <path d="M56 36l-3 10 9-5zM87 37l-1 9 6-7z" fill="#3f9673"/>
          <path d="M15 12c8-2 20 1 28 6 9-4 19-3 28 3-1 9-8 12-18 10-3 1-7 3-8 6l-1 5-3 9-3-10-2-8c-9 2-15-1-16-7-2-4-2-8-5-14z" fill="#cadb66"/><path d="M14 12c10-3 21 0 29 2 11-1 20 1 28 7" fill="none" stroke="#824422" stroke-width="2.800"/><path d="M38 16h10l-3 11-3 16-3-15z" fill="#f3e0a2"/><circle cx="29" cy="19" r="2" fill="#6a4a1a"/><circle cx="59" cy="21" r="2" fill="#6a4a1a"/><path d="M43 15 39 7M44 15l5-7" stroke="#b48a22" stroke-width="2"/>
        </svg>
      </div>
      <div class="apps">${apps.map(a => html`<div class="slot ${state[a] ?? ""}">${app(a)}${a === "whatsapp" ? html`<div class="count">2</div>` : nothing}</div>`)}</div>
      <div class="tray">
        <svg width="206" height="32" viewBox="0 0 206 32" fill="none" stroke="#fff" stroke-width="2" stroke-linecap="round" stroke-linejoin="round">
          <path d="M2 22 14 10l12 12"/>
          <g stroke="none"><circle cx="77" cy="13" r="9" fill="#8f9aae"/><path d="M69 28q-8 0-8-8t8-8q5 0 7 5h9v11z" fill="#d9dde5"/><circle cx="84.500" cy="22" r="9" fill="#5ecbff"/></g><path d="M84.500 20.500v7M84.500 16v.2" stroke="#0d2040" stroke-width="2.500"/>
          <g transform="translate(2 0)"><g stroke-width="2.300"><path d="M125 12c9-9 21-9 30 0M129 17c7-7 15-7 22 0M133.500 21c4-4 9-4 13 0"/></g><circle cx="140" cy="25.500" r="2.300" fill="#fff"/></g>
          <path d="M175 12h5l7-6v21l-7-6h-5zM192 13q3 3.500 0 7M197 9.500q6 7 0 14M201 6q9 10 0 21"/>
        </svg>
        <div class="clock">${line("1:15 AM", 80)}${line("7/22/2025", 110)}</div>
        <svg width="28" height="30" viewBox="0 0 28 30" fill="none" stroke="#fff" stroke-width="2.200" stroke-linejoin="round"><path d="M14 1c12 3 15 15 8 23-6 6-15 5-20-1 10-1 16-10 12-22z"/></svg>
      </div>`;
  }
}

@customElement("app-root")
class AppRoot extends LitElement {
  static styles = [base, css`
    :host { display: flex; flex-direction: column; position: relative; width: 2560px; height: 1440px; overflow: hidden; background: #fff; font-family: "Open Sans", "Noto Sans", sans-serif; }
    .view { display: flex; height: 1170px; flex: none; overflow: hidden; }
    .scroll { display: flex; flex-direction: column; align-items: center; width: 30px; padding: 9px 0; background: #fcfcfc; }
    .thumb { width: 18px; height: 381px; margin: 13px 0 auto; border-radius: 9px; background: #8b8b8b; }
    .action { position: absolute; left: 2346px; top: 1184px; width: 136px; height: 112px; border: 4px solid #fff; border-radius: 56px; display: grid; place-items: center; color: #fff; box-shadow: 0 24px 30px -10px rgba(0,0,0,.26), 0 4px 20px rgba(0,0,0,.06); background: rgba(238,246,255,.3); }
    task-bar { position: relative; }
  `];
  render() {
    return html`
      <browser-chrome></browser-chrome>
      <div class="view">
        <side-menu></side-menu>
        <webinar-page></webinar-page>
        <div class="scroll">
          <svg width="18" height="14" viewBox="0 0 18 14" fill="#8b8b8b"><path d="M9 0q1.500 0 2.200 1.200L17.500 11q1 3-1.500 3H2q-2.500 0-1.500-3L6.800 1.200Q7.500 0 9 0z"/></svg>
          <div class="thumb"></div>
          <svg width="18" height="14" viewBox="0 0 18 14" fill="#8b8b8b"><path d="M9 14q1.500 0 2.200-1.200L17.500 3q1-3-1.500-3H2q-2.500 0-1.500 3l6.300 9.800Q7.500 14 9 14z"/></svg>
        </div>
      </div>
      <div class="action">${icon("zap")}</div>
      <task-bar></task-bar>`;
  }
}
